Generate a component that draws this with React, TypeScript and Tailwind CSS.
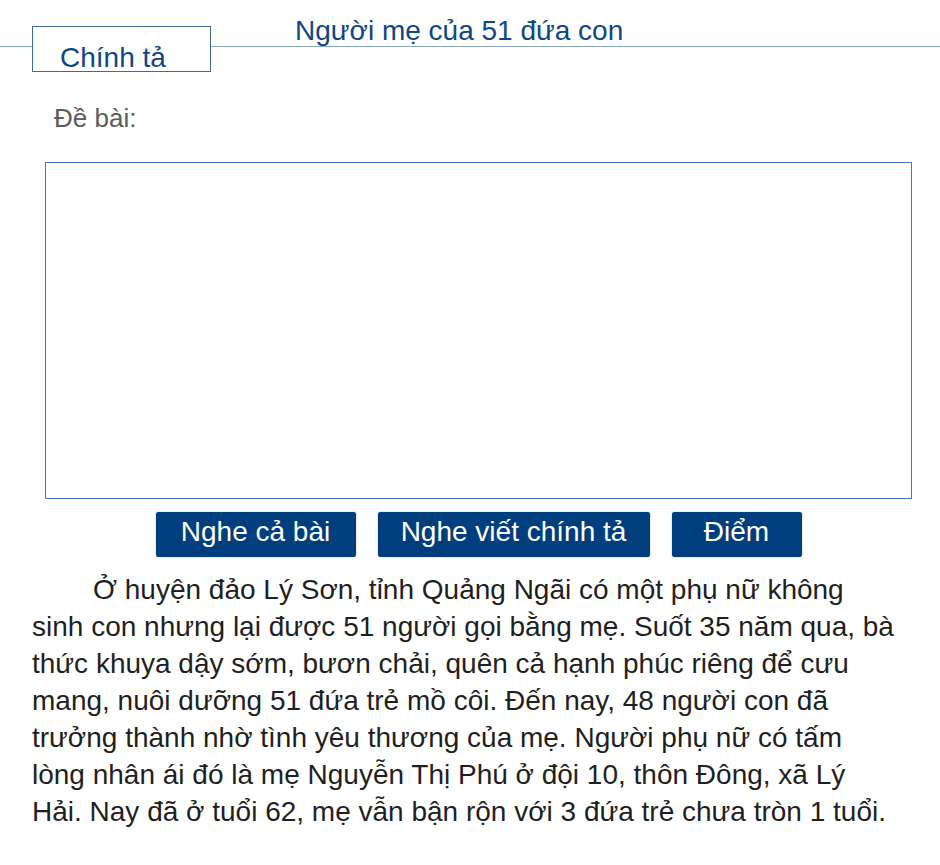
const paragraph =
  'Ở huyện đảo Lý Sơn, tỉnh Quảng Ngãi có một phụ nữ không sinh con nhưng lại được 51 người gọi bằng mẹ. Suốt 35 năm qua, bà thức khuya dậy sớm, bươn chải, quên cả hạnh phúc riêng để cưu mang, nuôi dưỡng 51 đứa trẻ mồ côi. Đến nay, 48 người con đã trưởng thành nhờ tình yêu thương của mẹ. Người phụ nữ có tấm lòng nhân ái đó là mẹ Nguyễn Thị Phú ở đội 10, thôn Đông, xã Lý Hải. Nay đã ở tuổi 62, mẹ vẫn bận rộn với 3 đứa trẻ chưa tròn 1 tuổi.';

const buttons = [
  { label: 'Nghe cả bài', width: 'w-[200px]' },
  { label: 'Nghe viết chính tả', width: 'w-[272px]' },
  { label: 'Điểm', width: 'w-[130px]' },
];

export default function App() {
  return (
    <div className="min-h-screen w-[940px] bg-white font-['Liberation_Sans',Arial,sans-serif]">
      {/* header strip */}
      <header className="flex items-start">
        <div className="h-[47px] w-[32px] border-b border-[#87a3c6]" />
        <div className="mt-[26px] flex h-[46px] w-[179px] items-end border border-[#42699a] bg-white pl-[27px]">
          <span className="translate-y-[3px] text-[28px] leading-[32px] text-[#0f4784]">Chính tả</span>
        </div>
        <div className="h-[47px] flex-1 border-b border-[#87a3c6] pl-[84px] pt-[15px]">
          <h1 className="text-[28px] leading-[32px] text-[#0f4784]">Người mẹ của 51 đứa con</h1>
        </div>
      </header>

      <main className="px-[45px]">
        <p className="mt-[30px] pl-[9px] text-[26px] leading-[32px] text-[#5c5c5c]">Đề bài:</p>

        <div className="mt-[28px] h-[337px] w-[867px] border border-[#4577b6]" />

        <div className="mt-[13px] flex w-[867px] justify-center gap-[22px]">
          {buttons.map(({ label, width }) => (
            <button
              key={label}
              className={`${width} h-[45px] rounded-[3px] bg-[#003e7e] pb-[6px] text-[28px] leading-[32px] text-white shadow-[0_0_1px_#1c3d66]`}
            >
              {label}
            </button>
          ))}
        </div>
      </main>

      <p className="ml-[32px] mt-[14px] w-[866px] indent-[61px] text-[28px] leading-[37px] text-[#1f1f1f]">
        {paragraph}
      </p>
    </div>
  );
}
